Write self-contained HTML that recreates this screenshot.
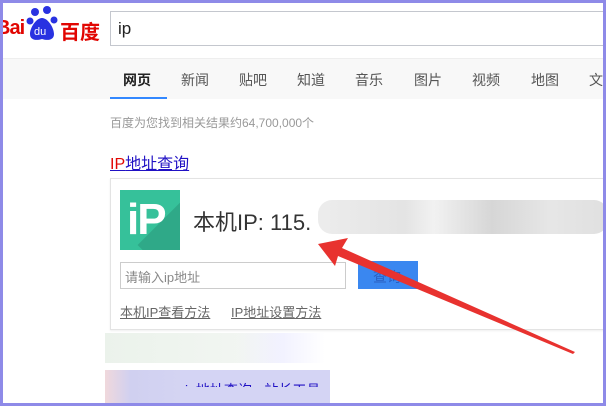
<html><head><style>
body{margin:0;width:606px;height:406px;overflow:hidden;background:#fff;font-family:"Liberation Sans","Noto Sans CJK SC",sans-serif;position:relative}
.a{position:absolute}
</style></head><body>
<div class="a" style="left:0;top:58px;width:606px;height:40px;background:#f8f8f8;border-top:1px solid #eee"></div>
<div class="a" style="left:-4px;top:17px;font-size:20px;font-weight:bold;color:#e10602;letter-spacing:-1px">Bai</div>
<svg class="a" style="left:26px;top:4px" width="36" height="40" viewBox="0 0 36 40"><circle cx="9" cy="8" r="4" fill="#2932e1"/><circle cx="21" cy="6" r="4" fill="#2932e1"/><circle cx="4" cy="17" r="3.5" fill="#2932e1"/><circle cx="28" cy="16" r="3.5" fill="#2932e1"/><path d="M16 14c-6 0-12 10-12 16 0 6 6 7 12 5 6 2 12 1 12-5 0-6-6-16-12-16z" fill="#2932e1"/><text x="8" y="31" font-size="11" fill="#fff" font-family="Liberation Sans">du</text></svg>
<div class="a" style="left:60px;top:16px;font-size:20px;font-weight:bold;color:#e10602">百度</div>
<div class="a" style="left:110px;top:11px;width:500px;height:35px;border:1px solid #c4c7ce;box-sizing:border-box"></div>
<div class="a" style="left:118px;top:19px;font-size:17px;color:#222">ip</div>
<div class="a" style="left:123px;top:70px;font-size:14px;color:#222;font-weight:bold">网页</div>
<div class="a" style="left:181px;top:70px;font-size:14px;color:#555">新闻</div>
<div class="a" style="left:239px;top:70px;font-size:14px;color:#555">贴吧</div>
<div class="a" style="left:297px;top:70px;font-size:14px;color:#555">知道</div>
<div class="a" style="left:355px;top:70px;font-size:14px;color:#555">音乐</div>
<div class="a" style="left:414px;top:70px;font-size:14px;color:#555">图片</div>
<div class="a" style="left:472px;top:70px;font-size:14px;color:#555">视频</div>
<div class="a" style="left:531px;top:70px;font-size:14px;color:#555">地图</div>
<div class="a" style="left:589px;top:70px;font-size:14px;color:#555">文</div>
<div class="a" style="left:110px;top:97px;width:57px;height:2px;background:#38f"></div>
<div class="a" style="left:110px;top:114px;font-size:12px;color:#999">百度为您找到相关结果约64,700,000个</div>
<div class="a" style="left:110px;top:150px;font-size:16px;color:#2011c4;text-decoration:underline"><span style="color:#e10602">IP</span>地址查询</div>
<div class="a" style="left:110px;top:178px;width:500px;height:152px;border:1px solid #e3e3e3;box-sizing:border-box;box-shadow:0 1px 2px #eee"></div>
<div class="a" style="left:120px;top:190px;width:60px;height:60px;background:#36c19a;overflow:hidden"><div style="position:absolute;left:30px;top:25px;width:60px;height:60px;background:#2fa988;transform:rotate(45deg)"></div><div style="position:absolute;left:7px;top:5px;font-size:44px;font-weight:bold;color:#fff;font-family:'Liberation Sans';letter-spacing:-2px">iP</div></div>
<div class="a" style="left:193px;top:205px;font-size:22px;color:#333">本机IP: 115.</div>
<div class="a" style="left:318px;top:200px;width:290px;height:34px;background:linear-gradient(90deg,#e8e8e8,#ddd 30%,#eee 40%,#ccc 60%,#e0e0e0 80%,#d8d8d8);border-radius:14px;opacity:.8"></div>
<div class="a" style="left:120px;top:262px;width:226px;height:27px;border:1px solid #ccc;box-sizing:border-box"></div>
<div class="a" style="left:125px;top:267px;font-size:13px;color:#888">请输入ip地址</div>
<div class="a" style="left:358px;top:261px;width:60px;height:28px;background:#3a87f0"></div>
<div class="a" style="left:373px;top:267px;font-size:14px;color:#2a5fc0">查询</div>
<div class="a" style="left:120px;top:302px;font-size:13px;color:#666;text-decoration:underline">本机IP查看方法</div>
<div class="a" style="left:231px;top:302px;font-size:13px;color:#666;text-decoration:underline">IP地址设置方法</div>
<div class="a" style="left:105px;top:333px;width:220px;height:30px;background:linear-gradient(90deg,#e6efe6,#eef3ee 60%,#eef 80%,#fff);opacity:.8"></div>
<div class="a" style="left:105px;top:370px;width:128px;height:36px;background:linear-gradient(90deg,#f0d8dc,#d0d0f0 20%,#d8d8f5)"></div>
<div class="a" style="left:180px;top:370px;width:150px;height:36px;background:#d4d4f4"></div>
<div class="a" style="left:185px;top:375px;width:145px;height:12px;overflow:hidden"><div style="font-size:14px;color:#2011c4;margin-top:5px">ip地址查询 - 站长工具</div></div>
<svg class="a" style="left:0;top:0" width="606" height="406"><polygon points="318,244 348,238 342,248 575,352 573,354 338,256 335,266" fill="#e8322f"/></svg>
<div class="a" style="left:0;top:0;width:606px;height:406px;box-sizing:border-box;border:3px solid #8e8ae8"></div>
</body></html>
